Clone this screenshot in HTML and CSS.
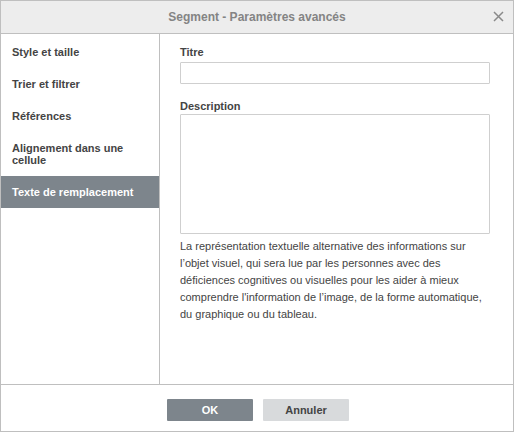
FILE: index.html
```html
<!DOCTYPE html>
<html lang="fr">
<head>
<meta charset="utf-8">
<title>Segment - Paramètres avancés</title>
<link rel="stylesheet" href="styles.css">
</head>
<body>
<div class="dialog">
  <div class="header">
    <span class="title">Segment - Paramètres avancés</span>
    <svg class="close" width="11" height="11" viewBox="0 0 11 11"><path d="M1 1L10 10M10 1L1 10" stroke="#8a8a8a" stroke-width="1.5"/></svg>
  </div>
  <div class="body">
    <div class="side">
      <div class="item">Style et taille</div>
      <div class="item">Trier et filtrer</div>
      <div class="item">Références</div>
      <div class="item two">Alignement dans une cellule</div>
      <div class="item active">Texte de remplacement</div>
    </div>
    <div class="main">
      <div class="label">Titre</div>
      <div class="input"></div>
      <div class="label desc-label">Description</div>
      <div class="textarea"></div>
      <p class="help">La représentation textuelle alternative des informations sur l’objet visuel, qui sera lue par les personnes avec des déficiences cognitives ou visuelles pour les aider à mieux comprendre l'information de l’image, de la forme automatique, du graphique ou du tableau.</p>
    </div>
  </div>
  <div class="footer">
    <button class="btn primary">OK</button>
    <button class="btn">Annuler</button>
  </div>
</div>
</body>
</html>
```
FILE: styles.css
```css
* { box-sizing: border-box; }
html, body { margin: 0; padding: 0; background: #fff; }
body { font-family: "Liberation Sans", Arial, sans-serif; color: #444; }
.dialog {
  width: 514px; height: 432px;
  border: 1px solid #bfbfbf;
  display: flex; flex-direction: column;
  background: #fff;
}
.header {
  height: 33px; flex: none;
  background: #ededed;
  border-bottom: 1px solid #bfbfbf;
  display: flex; align-items: center; justify-content: center;
  position: relative;
}
.title { font-size: 12px; font-weight: bold; color: #848484; }
.close { position: absolute; right: 9px; top: 10px; }
.body { flex: 1; display: flex; min-height: 0; }
.side {
  width: 159px; flex: none;
  border-right: 1px solid #bfbfbf;
  padding-top: 9px;
}
.item {
  font-size: 11px; font-weight: bold; color: #444;
  padding: 3px 11px 0 11px;
  height: 32px;
}
.item.two { height: 37px; line-height: 12px; padding-top: 3px; }
.item.active {
  background: #7d858c; color: #fff;
  height: 32px; display: flex; align-items: center; padding-top: 0;
}
.main { flex: 1; padding: 12px 23px 0 20px; }
.label { font-size: 11px; font-weight: bold; color: #444; height: 16px; }
.desc-label { margin-top: 16px; height: 14px; }
.input {
  height: 22px; border: 1px solid #cfcfcf; border-radius: 1px;
}
.textarea {
  height: 120px; border: 1px solid #cfcfcf; border-radius: 1px;
}
.help {
  margin: 4px 0 0 0;
  font-size: 11px; line-height: 17px; color: #444;
  padding-right: 8px;
}
.footer {
  height: 47px; flex: none;
  border-top: 1px solid #bfbfbf;
  display: flex; justify-content: center; align-items: flex-start;
  gap: 10px; padding: 14px 0 0 2px;
}
.btn {
  width: 86px; height: 22px; border: none; border-radius: 1px;
  font-family: "Liberation Sans", Arial, sans-serif;
  font-size: 11px; font-weight: bold;
  background: #d8dadc; color: #444;
}
.btn.primary { background: #7d858c; color: #fff; }
```
